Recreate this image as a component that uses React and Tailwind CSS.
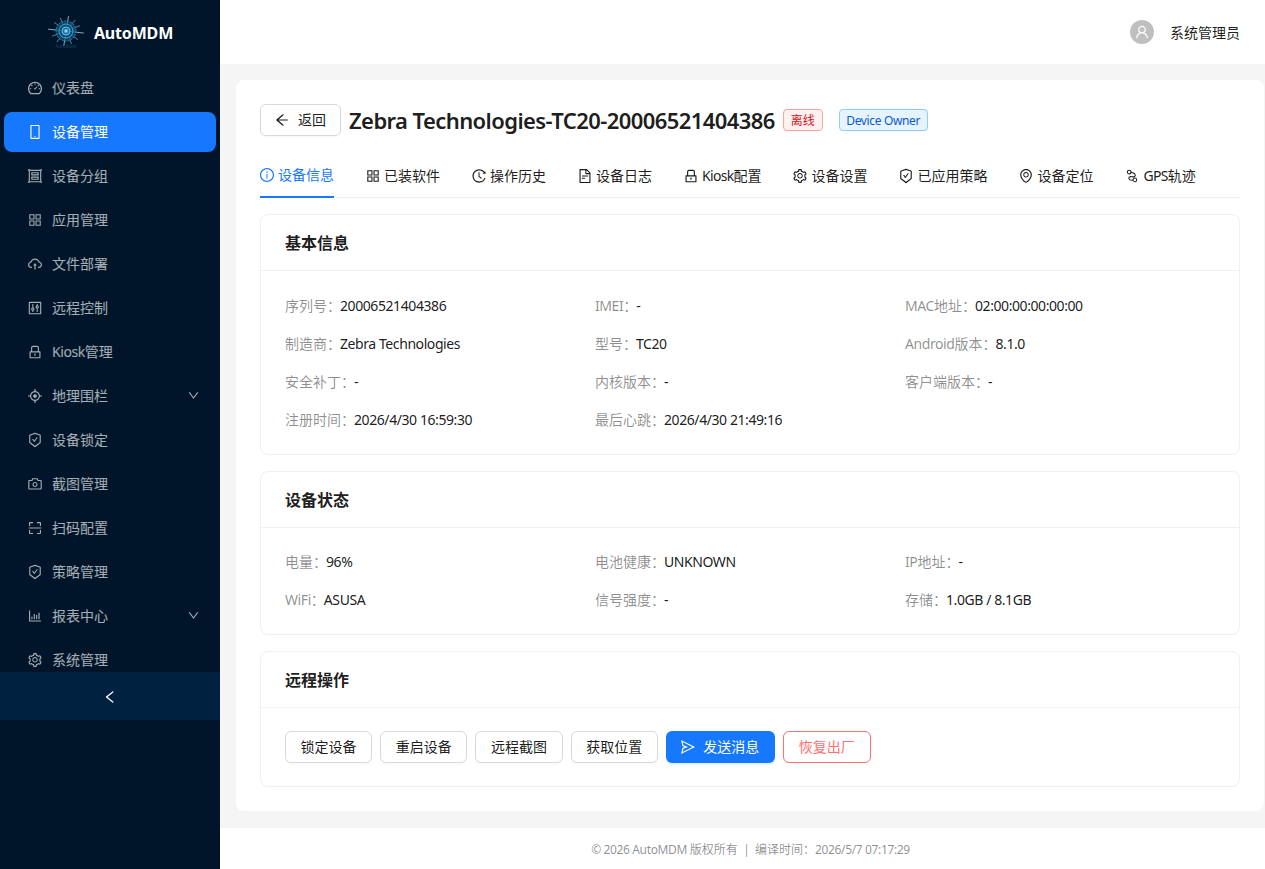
import React from "react";
import {
  AiOutlineDashboard, AiOutlineMobile, AiOutlineGroup, AiOutlineAppstore, AiOutlineCloudUpload,
  AiOutlineControl, AiOutlineLock, AiOutlineAim, AiOutlineSafetyCertificate, AiOutlineCamera,
  AiOutlineScan, AiOutlineBarChart, AiOutlineSetting, AiOutlineLeft, AiOutlineDown,
  AiOutlineInfoCircle, AiOutlineHistory, AiOutlineFileText, AiOutlineNodeIndex, AiOutlineEnvironment,
  AiOutlineSend, AiOutlineArrowLeft, AiOutlineUser,
} from "react-icons/ai";

const menu = [
  [AiOutlineDashboard, "仪表盘"],
  [AiOutlineMobile, "设备管理", "active"],
  [AiOutlineGroup, "设备分组"],
  [AiOutlineAppstore, "应用管理"],
  [AiOutlineCloudUpload, "文件部署"],
  [AiOutlineControl, "远程控制"],
  [AiOutlineLock, "Kiosk管理"],
  [AiOutlineAim, "地理围栏", "arrow"],
  [AiOutlineSafetyCertificate, "设备锁定"],
  [AiOutlineCamera, "截图管理"],
  [AiOutlineScan, "扫码配置"],
  [AiOutlineSafetyCertificate, "策略管理"],
  [AiOutlineBarChart, "报表中心", "arrow"],
  [AiOutlineSetting, "系统管理"],
];

const tabs = [
  [AiOutlineInfoCircle, "设备信息"],
  [AiOutlineAppstore, "已装软件"],
  [AiOutlineHistory, "操作历史"],
  [AiOutlineFileText, "设备日志"],
  [AiOutlineLock, "Kiosk配置"],
  [AiOutlineSetting, "设备设置"],
  [AiOutlineSafetyCertificate, "已应用策略"],
  [AiOutlineEnvironment, "设备定位"],
  [AiOutlineNodeIndex, "GPS轨迹"],
];

const basic = [
  ["序列号", "20006521404386"], ["IMEI", "-"], ["MAC地址", "02:00:00:00:00:00"],
  ["制造商", "Zebra Technologies"], ["型号", "TC20"], ["Android版本", "8.1.0"],
  ["安全补丁", "-"], ["内核版本", "-"], ["客户端版本", "-"],
  ["注册时间", "2026/4/30 16:59:30"], ["最后心跳", "2026/4/30 21:49:16"],
];

const status = [
  ["电量", "96%"], ["电池健康", "UNKNOWN"], ["IP地址", "-"],
  ["WiFi", "ASUSA"], ["信号强度", "-"], ["存储", "1.0GB / 8.1GB"],
];

// Latin runs are tightened slightly; CJK runs keep their natural 1em advance.
function T({ children, tight }) {
  const parts = String(children).split(/([\u0000-\u00ff]+)/).filter(Boolean);
  return parts.map((p, i) =>
    /^[\u0000-\u00ff]/.test(p) ? (
      <span key={i} className={tight ? "tracking-[-0.05em]" : "tracking-[-0.03em]"}>{p}</span>
    ) : (
      <span key={i}>{p}</span>
    )
  );
}

function Ico({ as: Icon }) {
  return <Icon className="w-4 h-4 -mx-px shrink-0" />;
}

function Logo() {
  const spokes = [8, 38, 68, 97, 128, 158, 187, 218, 248, 278, 308, 338];
  return (
    <svg width="36" height="34" viewBox="0 0 36 34" className="shrink-0">
      <g transform="translate(18 15)">
        {spokes.map((a, i) => (
          <line
            key={a}
            x1="0"
            y1="0"
            x2={(i % 3 === 0 ? 18 : 15) * Math.cos((a * Math.PI) / 180)}
            y2={(i % 3 === 0 ? 15 : 14) * Math.sin((a * Math.PI) / 180)}
            stroke={i % 3 === 0 ? "#a8d6e6" : "#6ea3bb"}
            strokeWidth="0.8"
          />
        ))}
        <circle r="10" fill="#0f5078" fillOpacity="0.75" stroke="#2f86b5" strokeWidth="1" strokeDasharray="2 1" />
        <circle r="7" fill="none" stroke="#3fa5d8" strokeWidth="1" />
        <circle r="4" fill="#1d6f9f" stroke="#63c6ee" strokeWidth="1" />
        <rect x="-1.5" y="-1.5" width="3" height="3" fill="#8ad8f5" />
      </g>
      <text x="18" y="32" textAnchor="middle" fontSize="4.5" fill="#14406a">AutoMore</text>
    </svg>
  );
}

function Field({ label, value }) {
  return (
    <div className="h-[22px] leading-[22px] whitespace-nowrap">
      <span className="text-black/45"><T>{label}</T>：</span>
      <span className="text-black/90 -ml-px"><T>{value}</T></span>
    </div>
  );
}

function Card({ title, children, first }) {
  return (
    <section className="border border-[#f0f0f0] rounded-lg">
      <div className="h-14 flex items-center px-6 border-b border-[#f0f0f0] text-base font-semibold text-black/90">{title}</div>
      <div className={first ? "px-6 pt-6 pb-[23px]" : "px-6 pt-[23px] pb-[23px]"}>{children}</div>
    </section>
  );
}

function Btn({ children }) {
  return (
    <button className="h-8 w-[87.2px] rounded-md border border-[#d9d9d9] bg-white text-sm text-black/90 shadow-[0_2px_0_rgba(0,0,0,0.02)]">{children}</button>
  );
}

export default function App() {
  return (
    <div className="flex h-[869px] w-[1265px] overflow-hidden bg-[#f5f5f5] text-sm text-black/90 font-['Noto_Sans','Noto_Sans_CJK_SC',sans-serif]">
      <aside className="w-[220px] shrink-0 bg-[#001529] flex flex-col">
        <div className="h-16 flex items-center justify-center gap-[10px] pl-[1px] pt-[2px] shrink-0">
          <Logo />
          <span className="text-white font-bold text-base tracking-[-0.01em]">AutoMDM</span>
        </div>
        <nav className="h-[608px] overflow-hidden shrink-0 pt-1">
          {menu.map(([Icon, label, kind]) => (
            <div
              key={label}
              className={
                kind === "active"
                  ? "h-10 mx-1 mb-1 rounded-lg bg-[#1677ff] text-white flex items-center pl-6 pr-4"
                  : "h-10 mx-1 mb-1 rounded-lg text-white/65 flex items-center pl-6 pr-4"
              }
            >
              <Ico as={Icon} />
              <span className="ml-[10px] flex-1"><T>{label}</T></span>
              {kind === "arrow" && <AiOutlineDown className="text-[13px] -mt-[2px]" />}
            </div>
          ))}
        </nav>
        <div className="h-12 shrink-0 bg-[#002140] flex items-center justify-center text-white pt-px">
          <Ico as={AiOutlineLeft} />
        </div>
      </aside>

      <div className="flex-1 min-w-0 flex flex-col">
        <header className="h-16 shrink-0 bg-white flex items-center justify-end pr-[25px]">
          <span className="w-6 h-6 rounded-full bg-black/25 text-white flex items-center justify-center">
            <Ico as={AiOutlineUser} />
          </span>
          <span className="ml-4 mt-[2px]">系统管理员</span>
        </header>

        <main className="flex-1 min-h-0 pt-4 pl-4 pr-px">
          <div className="bg-white rounded-lg p-6 h-[731px]">
            <div className="flex items-center h-8 mb-[17px]">
              <button className="h-8 w-[81px] rounded-md border border-[#d9d9d9] bg-white flex items-center justify-center gap-[9px] shadow-[0_2px_0_rgba(0,0,0,0.02)]">
                <Ico as={AiOutlineArrowLeft} />
                <span>返回</span>
              </button>
              <h1 className="ml-2 pt-[2px] text-[22px] font-semibold text-black/90 whitespace-nowrap tracking-[-0.58px]">Zebra Technologies-TC20-20006521404386</h1>
              <span className="ml-2 h-[22px] w-10 pt-px justify-center flex items-center rounded border border-[#ffa39e] bg-[#fff1f0] text-[#cf1322] text-xs">离线</span>
              <span className="ml-4 h-[22px] w-[89px] pt-px justify-center flex items-center rounded border border-[#91caff] bg-[#e6f4ff] text-[#0958d9] text-xs whitespace-nowrap"><T>Device Owner</T></span>
            </div>

            <div className="flex gap-8 border-b border-[#f0f0f0] mb-4 h-[45px]">
              {tabs.map(([Icon, label], i) => (
                <div
                  key={label}
                  className={
                    i === 0
                      ? "h-[45px] flex items-center gap-1 text-[#1677ff] border-b-2 border-[#1677ff] whitespace-nowrap"
                      : "h-[45px] flex items-center gap-1 whitespace-nowrap"
                  }
                >
                  <Ico as={Icon} />
                  <span><T tight>{label}</T></span>
                </div>
              ))}
            </div>

            <div className="flex flex-col gap-4">
              <Card title="基本信息" first>
                <div className="grid grid-cols-3 gap-y-4">
                  {basic.map(([l, v]) => <Field key={l} label={l} value={v} />)}
                </div>
              </Card>
              <Card title="设备状态">
                <div className="grid grid-cols-3 gap-y-4">
                  {status.map(([l, v]) => <Field key={l} label={l} value={v} />)}
                </div>
              </Card>
              <Card title="远程操作">
                <div className="flex gap-2">
                  <Btn>锁定设备</Btn>
                  <Btn>重启设备</Btn>
                  <Btn>远程截图</Btn>
                  <Btn>获取位置</Btn>
                  <button className="h-8 w-[109px] rounded-md bg-[#1677ff] text-white flex items-center justify-center gap-2 shadow-[0_2px_0_rgba(5,145,255,0.1)]">
                    <Ico as={AiOutlineSend} />
                    <span>发送消息</span>
                  </button>
                  <button className="h-8 w-[88px] rounded-md border border-[#ff4d4f] bg-white text-[#ff4d4f] opacity-80">恢复出厂</button>
                </div>
              </Card>
            </div>
          </div>
        </main>

        <footer className="h-[41px] shrink-0 bg-white flex items-center justify-center pl-4 pt-[2px] text-xs text-black/45 whitespace-pre">
          <T>{"© 2026 AutoMDM "}</T>版权所有<T>{"  |  "}</T>编译时间：<T>2026/5/7 07:17:29</T>
        </footer>
      </div>
    </div>
  );
}
